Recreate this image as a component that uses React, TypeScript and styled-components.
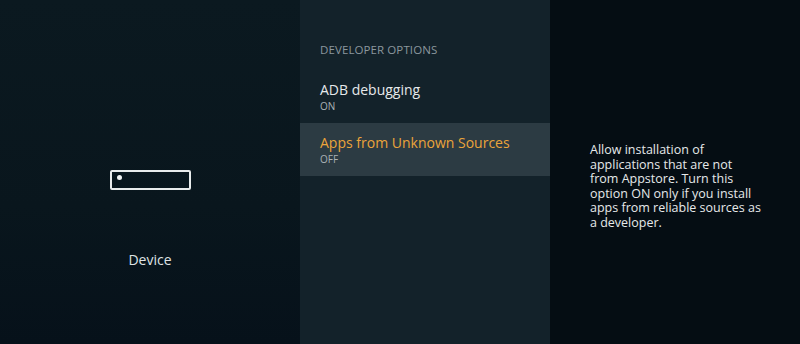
import { createGlobalStyle, styled } from 'styled-components'

const GlobalStyle = createGlobalStyle`
    html, body {
        margin: 0;
        padding: 0;
        background: #0a161d;
    }
    body {
        font-family: 'Open Sans', 'Liberation Sans', sans-serif;
        -webkit-font-smoothing: antialiased;
    }
`

const Screen = styled.div`
    display: grid;
    grid-template-columns: 300px 250px 1fr;
    width: 800px;
    height: 344px;
    overflow: hidden;
`

const Side = styled.section`
    display: flex;
    flex-direction: column;
    align-items: center;
    background: linear-gradient(180deg, #0b1920 0%, #09161d 60%, #06111a 100%);
    padding-top: 170px;
`

const DeviceIcon = styled.div`
    position: relative;
    box-sizing: border-box;
    width: 81px;
    height: 20px;
    border: 2px solid #e9ecec;
    border-radius: 2px;
`

const Led = styled.span`
    position: absolute;
    left: 5px;
    top: 3px;
    width: 5px;
    height: 5px;
    border-radius: 50%;
    background: #f2f4f4;
`

const SideLabel = styled.div`
    margin-top: 60px;
    color: #dfe3e5;
    font-size: 14px;
    line-height: 20px;
`

const Menu = styled.section`
    display: flex;
    flex-direction: column;
    background: #13222a;
    padding-top: 42px;
`

const MenuHeader = styled.div`
    padding: 0 20px;
    height: 28px;
    color: #8b979d;
    font-size: 11.5px;
    line-height: 16px;
    letter-spacing: 0.1px;
`

const Row = styled.div<{ $active?: boolean }>`
    display: flex;
    flex-direction: column;
    justify-content: center;
    height: 53px;
    padding: 0 20px;
    background: ${p => (p.$active ? '#2c3b43' : 'transparent')};
`

const RowTitle = styled.div<{ $active?: boolean }>`
    color: ${p => (p.$active ? '#eba43a' : '#e6e9ea')};
    font-size: 14px;
    line-height: 19px;
`

const RowValue = styled.div`
    color: #a9b1b5;
    font-size: 10px;
    line-height: 14px;
`

const Info = styled.section`
    background: #050d13;
    padding: 143px 0 0 40px;
`

const InfoText = styled.p`
    margin: 0;
    width: 173px;
    color: #e6e9ea;
    font-size: 12.5px;
    line-height: 14.6px;
`

export default function App() {
    return (
        <>
            <GlobalStyle />
            <Screen>
                <Side>
                    <DeviceIcon>
                        <Led />
                    </DeviceIcon>
                    <SideLabel>Device</SideLabel>
                </Side>
                <Menu>
                    <MenuHeader>DEVELOPER OPTIONS</MenuHeader>
                    <Row>
                        <RowTitle>ADB debugging</RowTitle>
                        <RowValue>ON</RowValue>
                    </Row>
                    <Row $active>
                        <RowTitle $active>Apps from Unknown Sources</RowTitle>
                        <RowValue>OFF</RowValue>
                    </Row>
                </Menu>
                <Info>
                    <InfoText>
                        Allow installation of applications that are not from Appstore. Turn this
                        option ON only if you install apps from reliable sources as a developer.
                    </InfoText>
                </Info>
            </Screen>
        </>
    )
}
